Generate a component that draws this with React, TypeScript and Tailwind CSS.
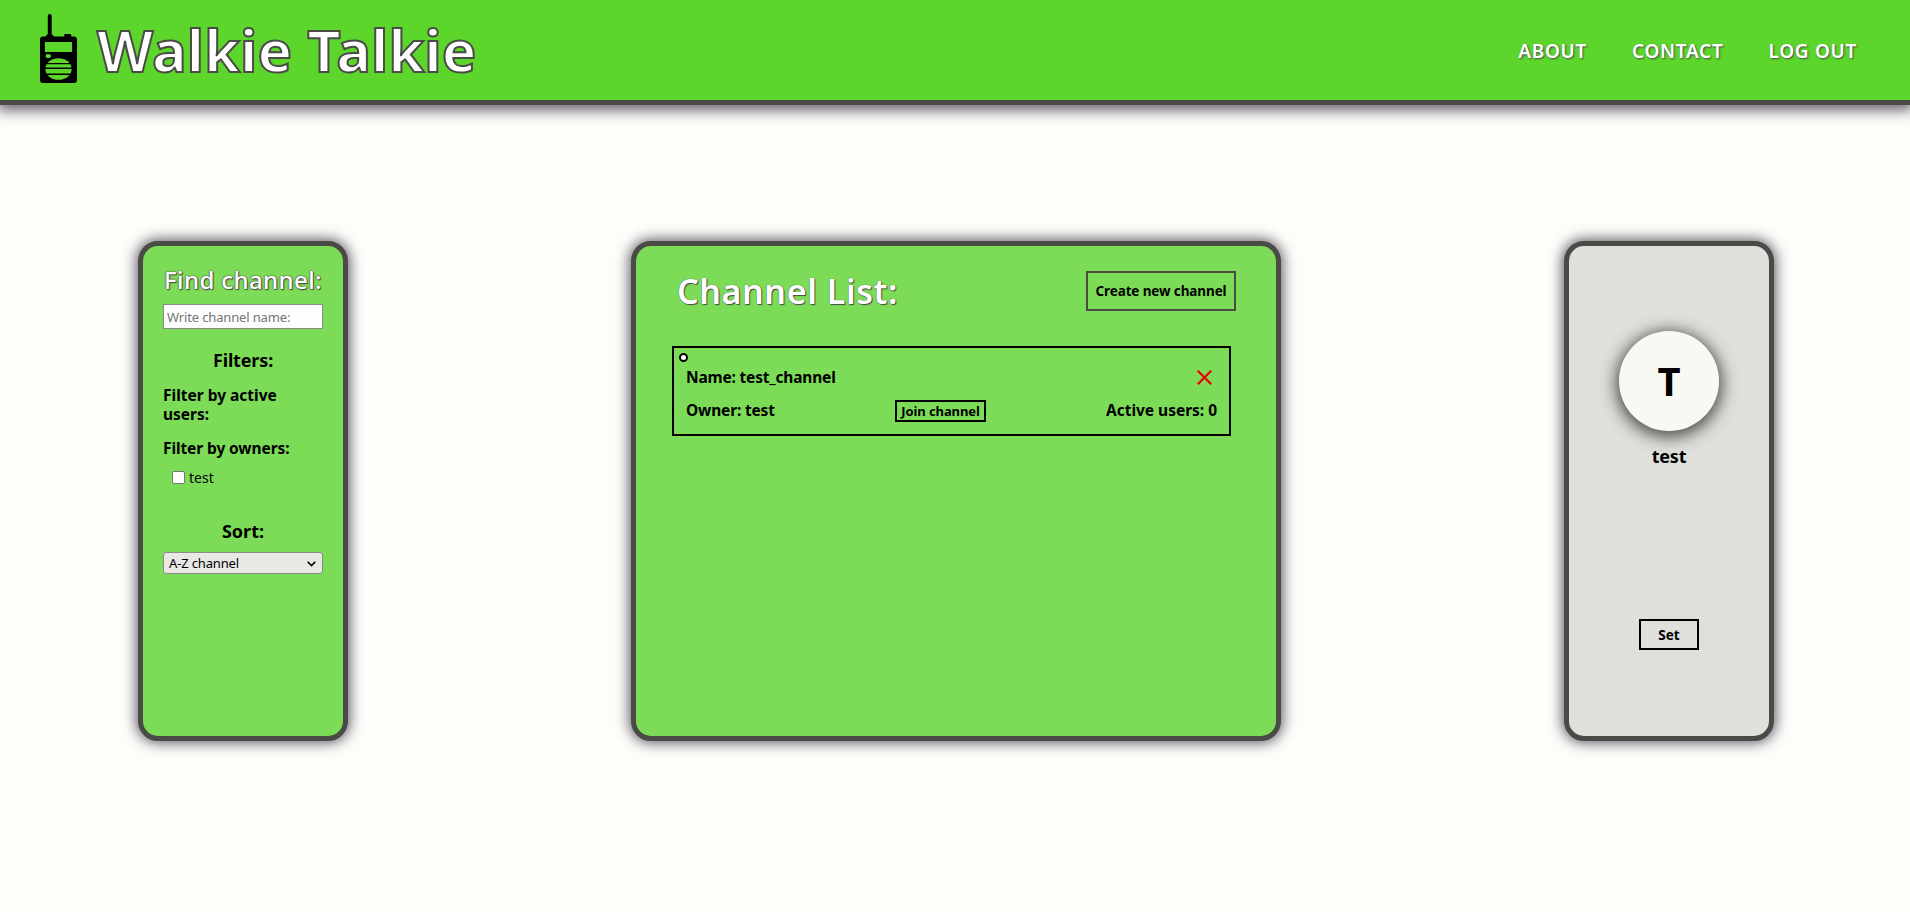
import type { ReactNode } from "react";

const panel =
  "h-[500px] shrink-0 rounded-[20px] border-5 border-[#4a4a47] shadow-[0_0_13px_2px_rgba(50,40,60,0.75)]";

function WalkieIcon() {
  return (
    <svg className="ml-10 h-[70px] w-[37px] shrink-0" viewBox="0 0 38 70" preserveAspectRatio="none">
      <path
        fillRule="evenodd"
        d="M8 2Q8 0 10 0Q12 0 12 2V20L14.500 22.500H25V20H32V22.500H35Q38 22.500 38 25.500V66Q38 69 35 69H3Q0 69 0 66V25.500Q0 22.500 3 22.500H5.500L8 20Z M5 28V38H33V28Z"
        fill="#000"
      />
      <ellipse cx="8.500" cy="42" rx="2.800" ry="2.100" fill="#5cd62b" />
      <clipPath id="speaker">
        <ellipse cx="19" cy="55" rx="13.500" ry="10.800" />
      </clipPath>
      <g clipPath="url(#speaker)" fill="#5cd62b">
        <path d="M5 44h28v5H5zM5 50.200h28v3.400H5zM5 55h28v4.500H5zM5 61h28v6H5z" />
      </g>
    </svg>
  );
}

function Row({ children }: { children: ReactNode }) {
  return <div className="flex h-5 items-center justify-between">{children}</div>;
}

export default function App() {
  return (
    <div className="h-[912px] w-full overflow-hidden bg-[#fdfdfa] font-['Noto_Sans',sans-serif] text-black">
      <header className="flex h-[105px] items-start border-b-5 border-[#4a4a47] bg-[#5cd62b] shadow-[0_2px_13px_3px_rgba(50,40,60,0.75)]">
        <div className="flex pt-[14px]">
          <WalkieIcon />
          <h1 className="mt-[-2px] ml-[20px] h-[76px] text-[58px] leading-[76px] font-bold tracking-[0.05px] whitespace-nowrap text-white [-webkit-text-stroke:2px_#4a4a47]">
            Walkie Talkie
          </h1>
        </div>
        <nav className="mr-[53px] ml-auto flex gap-[45px] pt-[37px] text-[19px] leading-[28px] font-semibold tracking-[0.7px] whitespace-nowrap text-white [text-shadow:1px_1px_2px_#4a4a47]">
          <a>ABOUT</a>
          <a>CONTACT</a>
          <a>LOG OUT</a>
        </nav>
      </header>

      <main className="flex justify-between pt-[136px] pr-[136px] pl-[138px]">
        <aside className={`${panel} w-[210px] bg-[#7ddc57] px-5 pt-[18px]`}>
          <h2 className="h-8 text-center text-[24px] leading-[32px] font-medium tracking-[0.4px] whitespace-nowrap text-white [text-shadow:0_0_2px_#4a4a47,0_0_1px_#4a4a47,1px_1px_1px_#4a4a47]">
            Find channel:
          </h2>
          <input
            className="mt-2 block h-[25px] w-40 border border-[#8a8a86] bg-[#fdfdfd] px-[3px] text-[13px] tracking-[-0.15px] placeholder:text-[#757575]"
            placeholder="Write channel name:"
          />
          <h3 className="mt-[19px] text-center text-[18px] leading-6 font-bold tracking-[-0.15px]">Filters:</h3>
          <h4 className="mt-[14px] w-40 text-[15.500px] leading-[19px] font-bold">
            Filter by active
            <br />
            users:
          </h4>
          <h4 className="mt-[15px] text-[15.500px] leading-[19px] font-bold tracking-[-0.1px] whitespace-nowrap">
            Filter by owners:
          </h4>
          <label className="mt-[10px] ml-[9px] flex h-[19px] items-center gap-1 text-[14px] leading-[19px]">
            <span className="size-[13px] rounded-[2px] border border-[#767676] bg-white" />
            test
          </label>
          <h3 className="mt-[32px] text-center text-[18px] leading-6 font-bold">Sort:</h3>
          <div className="mt-[9px] flex h-[22px] w-40 items-center justify-between rounded-[3px] border border-[#8a8a86] bg-[#e8e8e4] pt-px pr-[6px] pl-[5px] text-[13px] tracking-[-0.15px]">
            A-Z channel
            <svg className="h-[6px] w-[9px]" viewBox="0 0 9 6" fill="none" stroke="#000" strokeWidth="1.600">
              <path d="M.7.8 4.500 4.600 8.300.8" />
            </svg>
          </div>
        </aside>

        <section className={`${panel} w-[650px] bg-[#7ddc57] pr-10 pl-9`}>
          <div className="flex h-[65px] items-start justify-between pt-[25px]">
            <h2 className="mt-[-4px] ml-[5px] h-12 text-[34px] leading-[48px] font-semibold tracking-[0.6px] whitespace-nowrap text-white [text-shadow:0_0_1px_#4a4a47,1px_1px_1px_#4a4a47]">
              Channel List:
            </h2>
            <button className="h-10 w-[150px] border-2 border-[#4a4a47] text-[13.500px] font-bold tracking-[-0.12px] whitespace-nowrap">
              Create new channel
            </button>
          </div>
          <div className="relative mt-[35px] h-[90px] w-[559px] border-2 border-black pt-[19px] pr-3 pl-3">
            <span className="absolute top-[5px] left-[5px] size-[9px] rounded-full border-2 border-black bg-white" />
            <div className="flex flex-col gap-[13px] text-[15.500px] leading-5 font-bold tracking-[-0.18px] whitespace-nowrap">
              <Row>
                <span>Name: test_channel</span>
                <svg className="mr-[5px] size-[15px]" viewBox="0 0 15 15" stroke="#ea0000" strokeWidth="2.200">
                  <path d="M.7.7 14.300 14.300M14.300.7.7 14.300" />
                </svg>
              </Row>
              <Row>
                <span className="w-[209px]">Owner: test</span>
                <button className="mt-[2px] h-[22px] w-[91px] border-2 border-black text-[13px] leading-[18px] tracking-[-0.08px]">
                  Join channel
                </button>
                <span className="flex-1 text-right tracking-[-0.02px]">Active users: 0</span>
              </Row>
            </div>
          </div>
        </section>

        <aside className={`${panel} flex w-[210px] flex-col items-center bg-[#dfdfdb] pt-[85px]`}>
          <div className="flex size-[100px] items-center justify-center rounded-full bg-[#f9f9f3] text-[40px] leading-none font-bold shadow-[0_3px_16px_3px_rgba(40,40,40,0.8)]">
            T
          </div>
          <div className="mt-[13px] text-[18px] leading-6 font-bold tracking-[-0.2px]">test</div>
          <button className="mt-[151px] h-[31px] w-[60px] border-2 border-black pt-px text-[13.500px] font-bold">
            Set
          </button>
        </aside>
      </main>
    </div>
  );
}
